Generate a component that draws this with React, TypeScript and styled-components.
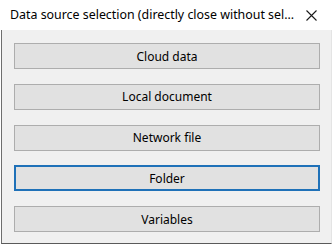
import styled, { createGlobalStyle } from "styled-components";

const GlobalStyle = createGlobalStyle`
    html, body {
        margin: 0;
        padding: 0;
        background: #ffffff;
    }
    body {
        font-family: "Noto Sans", "Open Sans", "Liberation Sans", sans-serif;
    }
`;

const sources = [
    { label: "Cloud data", focused: false },
    { label: "Local document", focused: false },
    { label: "Network file", focused: false },
    { label: "Folder", focused: true },
    { label: "Variables", focused: false },
];

export default function App() {
    return (
        <>
            <GlobalStyle />
            <Window>
                <TitleBar>
                    <Title>Data source selection (directly close without sel...</Title>
                    <CloseButton aria-label="Close">
                        <svg width="11" height="11" viewBox="0 0 11 11">
                            <path d="M0.5 0.5 L10.5 10.5 M10.5 0.5 L0.5 10.5" stroke="#1a1a1a" strokeWidth="1.1" fill="none" />
                        </svg>
                    </CloseButton>
                </TitleBar>
                <Body>
                    {sources.map((s) => (
                        <SourceButton key={s.label} $focused={s.focused}>
                            {s.label}
                        </SourceButton>
                    ))}
                </Body>
            </Window>
        </>
    );
}

const Window = styled.div`
    width: 332px;
    height: 245px;
    display: flex;
    flex-direction: column;
    overflow: hidden;
`;

const TitleBar = styled.div`
    height: 30px;
    flex-shrink: 0;
    display: flex;
    align-items: center;
    justify-content: space-between;
    background: #ffffff;
    padding: 0 10px 0 10px;
    box-sizing: border-box;
`;

const Title = styled.span`
    font-size: 12.4px;
    color: #000000;
    white-space: nowrap;
    padding-bottom: 1px;
`;

const CloseButton = styled.div`
    width: 20px;
    height: 20px;
    display: flex;
    align-items: center;
    justify-content: center;
    margin-right: 1px;
`;

const Body = styled.div`
    flex: 1;
    margin-left: 1px;
    background: #f0f0f0;
    border-left: 1px solid #6e6e6e;
    border-bottom: 1px solid #5a5a5a;
    border-right: 1px solid #e4e4e4;
    margin-bottom: 1px;
    display: flex;
    flex-direction: column;
    gap: 14.75px;
    padding: 13px 0 0 12px;
`;

const SourceButton = styled.div<{ $focused: boolean }>`
    width: 306px;
    height: 26px;
    box-sizing: border-box;
    display: flex;
    align-items: center;
    justify-content: center;
    background: #e1e1e1;
    border: ${(p) => (p.$focused ? "2px solid #1f71b8" : "1px solid #adadad")};
    font-size: 12px;
    color: #000000;
    cursor: default;
    user-select: none;
`;
